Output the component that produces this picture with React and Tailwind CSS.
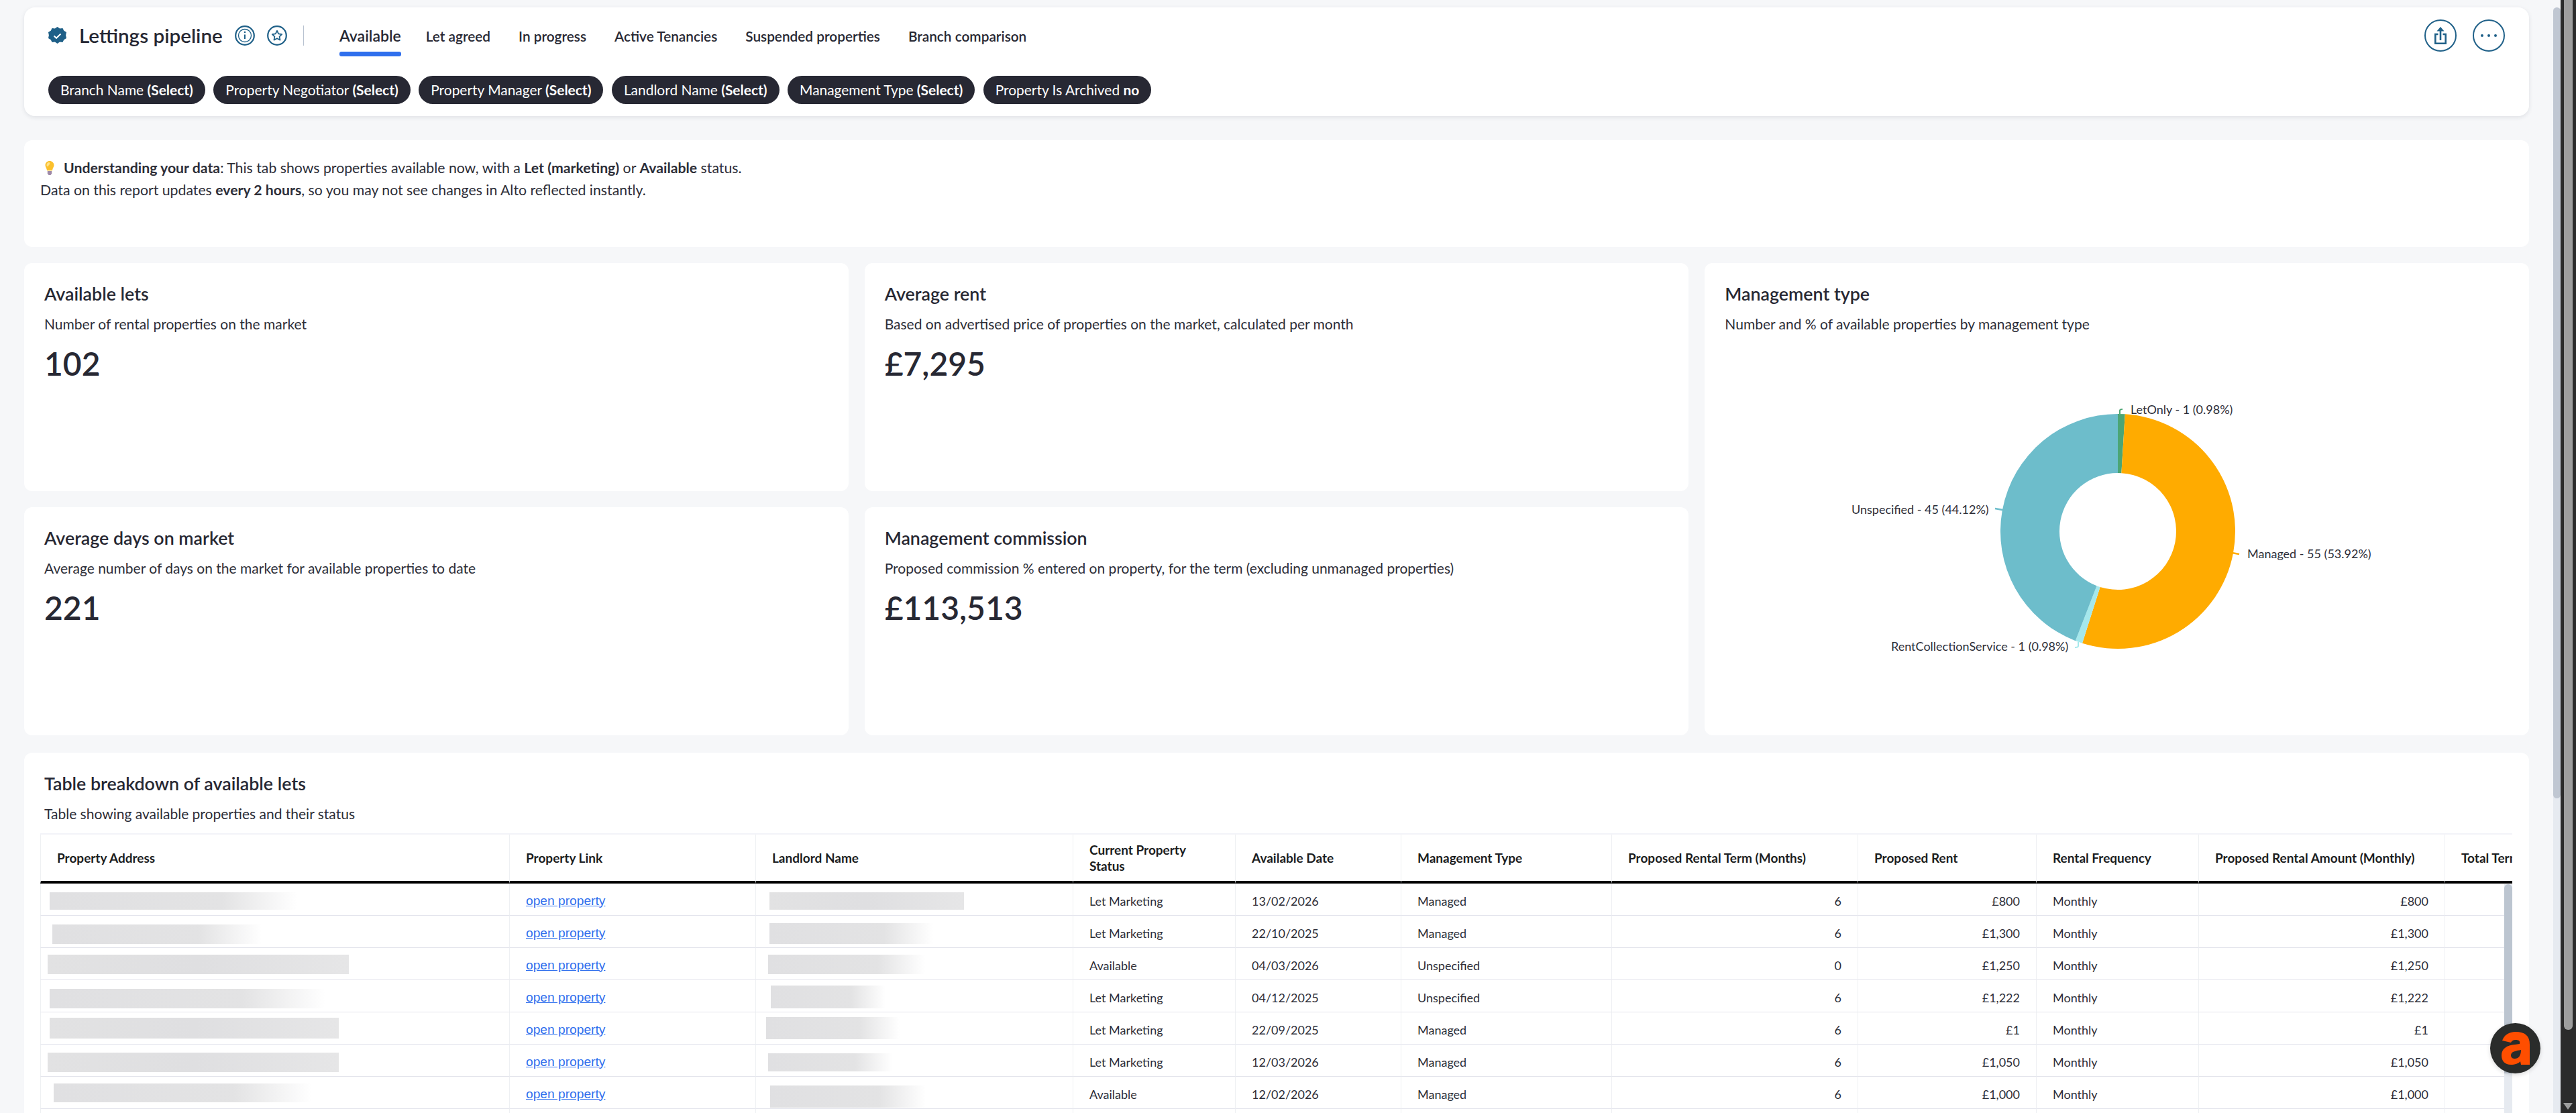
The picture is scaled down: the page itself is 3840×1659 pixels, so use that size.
import React from 'react'

const tabs = ['Let agreed', 'In progress', 'Active Tenancies', 'Suspended properties', 'Branch comparison']

const pills = [
  ['Branch Name', '(Select)'],
  ['Property Negotiator', '(Select)'],
  ['Property Manager', '(Select)'],
  ['Landlord Name', '(Select)'],
  ['Management Type', '(Select)'],
  ['Property Is Archived', 'no'],
]

const kpis = [
  { title: 'Available lets', desc: 'Number of rental properties on the market', value: '102' },
  { title: 'Average rent', desc: 'Based on advertised price of properties on the market, calculated per month', value: '£7,295' },
  { title: 'Average days on market', desc: 'Average number of days on the market for available properties to date', value: '221' },
  { title: 'Management commission', desc: 'Proposed commission % entered on property, for the term (excluding unmanaged properties)', value: '£113,513' },
]

const cols = [
  { name: 'Property Address', w: 'w-[700px]' },
  { name: 'Property Link', w: 'w-[367px]' },
  { name: 'Landlord Name', w: 'w-[473px]' },
  { name: 'Current Property Status', w: 'w-[242px]' },
  { name: 'Available Date', w: 'w-[247px]' },
  { name: 'Management Type', w: 'w-[314px]' },
  { name: 'Proposed Rental Term (Months)', w: 'w-[367px]' },
  { name: 'Proposed Rent', w: 'w-[266px]' },
  { name: 'Rental Frequency', w: 'w-[242px]' },
  { name: 'Proposed Rental Amount (Monthly)', w: 'w-[367px]' },
  { name: 'Total Term', w: 'w-[200px]' },
]

// blur specs: left inside the cell, width, top inside the row, height, gradient
const fade = 'from-[#e0e0e2] via-[#e3e3e4] via-70% to-white'
const solid = 'from-[#e2e2e3] via-[#dfdfe1] to-[#e6e6e7]'

const rows = [
  { addr: [13, 369, 13, 26, fade], land: [20, 290, 13, 26, solid], status: 'Let Marketing', date: '13/02/2026', type: 'Managed', term: '6', rent: '£800' },
  { addr: [17, 312, 13, 29, fade], land: [20, 244, 11, 31, fade], status: 'Let Marketing', date: '22/10/2025', type: 'Managed', term: '6', rent: '£1,300' },
  { addr: [10, 449, 10, 29, solid], land: [18, 234, 10, 29, fade], status: 'Available', date: '04/03/2026', type: 'Unspecified', term: '0', rent: '£1,250' },
  { addr: [13, 411, 13, 29, fade], land: [22, 171, 8, 34, fade], status: 'Let Marketing', date: '04/12/2025', type: 'Unspecified', term: '6', rent: '£1,222' },
  { addr: [13, 431, 8, 31, solid], land: [15, 199, 7, 33, fade], status: 'Let Marketing', date: '22/09/2025', type: 'Managed', term: '6', rent: '£1' },
  { addr: [10, 434, 12, 29, solid], land: [18, 185, 13, 27, fade], status: 'Let Marketing', date: '12/03/2026', type: 'Managed', term: '6', rent: '£1,050' },
  { addr: [19, 384, 10, 28, fade], land: [21, 232, 13, 33, fade], status: 'Available', date: '12/02/2026', type: 'Managed', term: '6', rent: '£1,000' },
]

// redacted cell: blurred grey block placed from the data
function Blur({ spec }) {
  const [left, width, top, height, colors] = spec
  return <div className={`bg-gradient-to-r ${colors}`} style={{ marginLeft: left, marginTop: top, width, height }} />
}

function Badge() {
  return (
    <svg viewBox="0 0 27 27" className="w-[27px] h-[27px] shrink-0">
      <path fill="#1f6088" d="M13.5 0l3.6 2.4 4.3-.4 1.9 3.8 3.7 2.2-.9 4.5.9 4.5-3.7 2.2-1.9 3.8-4.3-.4-3.6 2.4-3.6-2.4-4.3.4-1.900-3.800L0 17l.9-4.500L0 8l3.700-2.200L5.600 2l4.300.4z" />
      <path fill="none" stroke="#fff" strokeWidth="2" d="M8.500 13.500l3.500 3.300 6.500-6.300" />
    </svg>
  )
}

function InfoIcon() {
  return (
    <svg viewBox="0 0 30 30" className="w-[30px] h-[30px]" fill="none" stroke="#1f6088">
      <circle cx="15" cy="15" r="13.800" strokeWidth="2.200" />
      <circle cx="15" cy="15" r="9.500" strokeWidth="1.300" />
      <path strokeWidth="2" d="M15 13.500v6.500" />
      <circle cx="15" cy="10" r="1.300" fill="#1f6088" stroke="none" />
    </svg>
  )
}

function StarIcon() {
  return (
    <svg viewBox="0 0 30 30" className="w-[30px] h-[30px]" fill="none" stroke="#1f6088">
      <circle cx="15" cy="15" r="13.800" strokeWidth="2.200" />
      <path strokeWidth="1.800" strokeLinejoin="round" d="M15 7.800l2.200 4.600 5 .7-3.600 3.500.9 5L15 19.200l-4.500 2.400.9-5-3.600-3.500 5-.7z" />
    </svg>
  )
}

function ShareIcon() {
  return (
    <svg viewBox="0 0 18 26" className="w-[18px] h-[26px]" fill="none" stroke="#1f6088" strokeWidth="2.600">
      <path d="M5.500 11H1.300v13.700h15.400V11h-4.200" />
      <path d="M9 20V5" />
      <path fill="#1f6088" stroke="none" d="M9 0l5.500 6.500h-11z" />
    </svg>
  )
}

function Bulb() {
  return (
    <svg viewBox="0 0 18 21" className="w-[18px] h-[21px] shrink-0">
      <path fill="#fbc02d" d="M9 0c3.600 0 6.500 2.700 6.500 6.300 0 2.700-2 4.200-2.600 8H5.100C4.500 10.500 2.500 9 2.500 6.300 2.500 2.700 5.400 0 9 0z" />
      <path fill="#ffe38a" d="M8 2C6 2 4.500 3.800 4.500 6S6.200 9 7 7.500 8.400 6 9 4.500 9.500 2 8 2z" />
      <path fill="#9e8aa8" d="M5.800 15h6.400v3.500L10.500 21h-3l-1.700-2.500z" />
    </svg>
  )
}

function AltoLogo() {
  return (
    <svg viewBox="0 0 42 49" className="w-[42px] h-[49px]">
      <path
        fill="#ff4e00"
        fillRule="evenodd"
        d="M1 13C4 5 11 0 21 0c14 0 21 6 21 19v30H29l-1-5c-3 3.500-8 5-14 5C5 49 0 43.500 0 35c0-10 8-15 20-16l7-1c1-4-1-6-6-6-4 0-6 2-7 4zM29 27c-6 1-15 2-15 8 0 4 3 5 6 5 5 0 9-4 9-13z"
      />
    </svg>
  )
}

function polar(r, pct) {
  const a = pct * 2 * Math.PI
  return [175 + r * Math.sin(a), 175 - r * Math.cos(a)]
}

function slice(from, to) {
  const [x1, y1] = polar(175, from)
  const [x2, y2] = polar(175, to)
  const [x3, y3] = polar(87, to)
  const [x4, y4] = polar(87, from)
  const large = to - from > 0.5 ? 1 : 0
  return `M${x1} ${y1}A175 175 0 ${large} 1 ${x2} ${y2}L${x3} ${y3}A87 87 0 ${large} 0 ${x4} ${y4}Z`
}

function Donut() {
  return (
    <svg viewBox="0 0 1228 700" className="absolute left-0 top-0 w-[1228px] h-[700px]" fontFamily="Lato, sans-serif" fontSize="18" fill="#2d2e38">
      <g transform="translate(441 225)">
        <path d={slice(0, 0.0098)} fill="#4ca574" />
        <path d={slice(0.0098, 0.549)} fill="#ffab00" />
        <path d={slice(0.549, 0.5588)} fill="#a5e8ec" />
        <path d={slice(0.5588, 1)} fill="#6dbdcb" />
      </g>
      <path d="M619 225v-5q0-2 4-2" fill="none" stroke="#4ca574" strokeWidth="2" />
      <path d="M786 432l11 2" fill="none" stroke="#ffab00" strokeWidth="2.500" />
      <path d="M444 368l-11-2" fill="none" stroke="#6dbdcb" strokeWidth="2.500" />
      <path d="M557 565v6q0 2-5 2" fill="none" stroke="#a5e8ec" strokeWidth="2" />
      <text x="635" y="225">LetOnly - 1 (0.98%)</text>
      <text x="809" y="440">Managed - 55 (53.92%)</text>
      <text x="219" y="374">Unspecified - 45 (44.12%)</text>
      <text x="278" y="578">RentCollectionService - 1 (0.98%)</text>
    </svg>
  )
}

function Kpi({ title, desc, value }) {
  return (
    <div className="bg-white rounded-[12px] px-[30px] pt-[30px]">
      <h3 className="text-[26.800px] leading-[32px] font-semibold text-[#272833]">{title}</h3>
      <p className="text-[21px] leading-[28px] mt-[15px] text-[#2d2e38]">{desc}</p>
      <div className="text-[48px] leading-[60px] font-semibold text-[#272833] mt-[15px]">{value}</div>
    </div>
  )
}

export default function App() {
  return (
    <div className="flex h-[1659px] w-[3840px] overflow-hidden bg-[#f6f7f9] text-[#272833] font-['Lato',sans-serif]">
      <main className="relative w-[3806px] shrink-0 pl-[36px] pr-[36px] pt-[11px]">
        {/* filter header */}
        <header className="h-[162px] bg-white rounded-[16px] shadow-[0_2px_6px_rgba(30,40,60,0.1)] px-[36px] pt-[18px]">
          <div className="flex items-start">
            <div className="flex items-center h-[48px] w-[434px] shrink-0">
              <Badge />
              <h1 className="ml-[19px] text-[29.600px] leading-[40px] font-semibold text-[#272833] whitespace-nowrap">Lettings pipeline</h1>
              <div className="ml-[18px] flex gap-[18px]">
                <InfoIcon />
                <StarIcon />
              </div>
              <div className="ml-[24px] w-[1px] h-[30px] bg-[#b8c2d0]" />
            </div>
            <nav className="flex gap-[42px] text-[#272833]">
              <a className="flex flex-col h-[55px] mr-[-5px] text-[23px] leading-[48px] font-semibold">
                <span className="h-[48px]">Available</span>
                <span className="h-[7px] rounded-[3px] bg-[#2f6fed]" />
              </a>
              {tabs.map((t) => (
                <a key={t} className="text-[20.800px] leading-[50px] font-semibold whitespace-nowrap">{t}</a>
              ))}
            </nav>
            <div className="ml-auto flex gap-[24px]">
              <button className="w-[48px] h-[48px] rounded-full border-[2.500px] border-[#1f6088] flex items-center justify-center">
                <ShareIcon />
              </button>
              <button className="w-[48px] h-[48px] rounded-full border-[2.500px] border-[#1f6088] flex items-center justify-center gap-[5.500px]">
                <span className="w-[4.500px] h-[4.500px] rounded-full bg-[#1f6088]" />
                <span className="w-[4.500px] h-[4.500px] rounded-full bg-[#1f6088]" />
                <span className="w-[4.500px] h-[4.500px] rounded-full bg-[#1f6088]" />
              </button>
            </div>
          </div>
          <div className="flex gap-[12.500px] mt-[29px]">
            {pills.map(([label, val]) => (
              <div key={label} className="h-[42px] rounded-full bg-[#272833] text-white text-[20.930px] leading-[42px] px-[18px] whitespace-nowrap">
                {label} <b>{val}</b>
              </div>
            ))}
          </div>
        </header>

        {/* info banner */}
        <section className="mt-[36px] h-[159px] bg-white rounded-[12px] pl-[24px] pt-[25px] text-[21.250px] leading-[33px] text-[#2d2e38]">
          <p className="flex items-center pl-[5px]">
            <Bulb />
            <span className="ml-[12px]">
              <b>Understanding your data</b>: This tab shows properties available now, with a <b>Let (marketing)</b> or <b>Available</b> status.
            </span>
          </p>
          <p>Data on this report updates <b>every 2 hours</b>, so you may not see changes in Alto reflected instantly.</p>
        </section>

        {/* kpis + donut */}
        <section className="mt-[24px] grid grid-cols-3 grid-rows-[340px_340px] gap-[24px]">
          <Kpi {...kpis[0]} />
          <Kpi {...kpis[1]} />
          <div className="relative row-span-2 bg-white rounded-[12px] px-[30px] pt-[30px]">
            <Donut />
            <h3 className="relative text-[26.800px] leading-[32px] font-semibold text-[#272833]">Management type</h3>
            <p className="relative text-[21px] leading-[28px] mt-[15px] text-[#2d2e38]">Number and % of available properties by management type</p>
          </div>
          <Kpi {...kpis[2]} />
          <Kpi {...kpis[3]} />
        </section>

        {/* table */}
        <section className="mt-[26px] h-[560px] bg-white rounded-t-[12px] pl-[24px] pr-[25px] pt-[30px]">
          <h3 className="pl-[6px] text-[26.800px] leading-[32px] font-semibold text-[#272833]">Table breakdown of available lets</h3>
          <p className="pl-[6px] text-[21px] leading-[28px] mt-[15px] text-[#2d2e38]">Table showing available properties and their status</p>
          <div className="relative mt-[15px] overflow-hidden border-t-[2px] border-[#f2f3f8] h-[430px]">
            <table className="table-fixed border-separate border-spacing-0 w-[3785px]">
              <thead>
                <tr>
                  {cols.map((c) => (
                    <th key={c.name} className={`${c.w} h-[73px] border-r border-b-[4px] border-r-[#eef0f3] border-b-black first:border-l first:border-l-[#eef0f3] px-[24px] text-left text-[19px] leading-[24px] font-bold text-[#1b1d21]`}>
                      {c.name}
                    </th>
                  ))}
                </tr>
              </thead>
              <tbody className="text-[18px] text-[#2d2e38]">
                {rows.map((r) => (
                  <tr key={r.date + r.rent}>
                    <td className="h-[48px] p-0 align-top border-r border-l border-b border-r-[#eef0f3] border-l-[#eef0f3] border-b-[#e3e4ec]"><Blur spec={r.addr} /></td>
                    <td className="h-[48px] px-[24px] pt-[5px] border-r border-b border-r-[#eef0f3] border-b-[#e3e4ec]"><a className="font-['Liberation_Sans',sans-serif] text-[19.200px] text-[#2f6fed] underline">open property</a></td>
                    <td className="h-[48px] p-0 align-top border-r border-b border-r-[#eef0f3] border-b-[#e3e4ec]"><Blur spec={r.land} /></td>
                    <td className="h-[48px] px-[24px] pt-[5px] border-r border-b border-r-[#eef0f3] border-b-[#e3e4ec]">{r.status}</td>
                    <td className="h-[48px] px-[24px] pt-[5px] border-r border-b border-r-[#eef0f3] border-b-[#e3e4ec]">{r.date}</td>
                    <td className="h-[48px] px-[24px] pt-[5px] border-r border-b border-r-[#eef0f3] border-b-[#e3e4ec]">{r.type}</td>
                    <td className="h-[48px] px-[24px] pt-[5px] border-r border-b border-r-[#eef0f3] border-b-[#e3e4ec] text-right">{r.term}</td>
                    <td className="h-[48px] px-[24px] pt-[5px] border-r border-b border-r-[#eef0f3] border-b-[#e3e4ec] text-right">{r.rent}</td>
                    <td className="h-[48px] px-[24px] pt-[5px] border-r border-b border-r-[#eef0f3] border-b-[#e3e4ec]">Monthly</td>
                    <td className="h-[48px] px-[24px] pt-[5px] border-r border-b border-r-[#eef0f3] border-b-[#e3e4ec] text-right">{r.rent}</td>
                    <td className="h-[48px] px-[24px] border-b border-b-[#e3e4ec]" />
                  </tr>
                ))}
                <tr>
                  {cols.map((c) => (
                    <td key={c.name} className="h-[48px] border-r border-r-[#eef0f3] first:border-l first:border-l-[#eef0f3]" />
                  ))}
                </tr>
              </tbody>
            </table>
            {/* table scrollbar */}
            <div className="absolute right-0 top-[74px] bottom-0 w-[12px] bg-[#e6eaf0]">
              <div className="h-[282px] rounded-t-full bg-[#bcc5d0]" />
            </div>
          </div>
        </section>

        {/* chat launcher */}
        <div className="absolute left-[3712px] top-[1525px] w-[75px] h-[75px] rounded-full bg-[#2a2c2b] shadow-[0_2px_6px_rgba(0,0,0,0.15)] flex items-center justify-center">
          <AltoLogo />
        </div>
      </main>

      {/* scrollbars */}
      <div className="w-[11px] shrink-0 bg-[#e6eaf0] mt-[11px] rounded-t-[6px]">
        <div className="h-[1179px] rounded-[6px] bg-[#c0c7d2]" />
      </div>
      <div className="relative w-[23px] shrink-0 bg-[#2b2b2b] px-[5px]">
        <div className="h-[1535px] rounded-b-[6px] bg-[#9e9e9e]" />
        <div className="absolute left-[4px] top-[1644px] w-0 h-0 border-x-[7.500px] border-x-transparent border-t-[10px] border-t-[#9e9e9e]" />
      </div>
    </div>
  )
}
